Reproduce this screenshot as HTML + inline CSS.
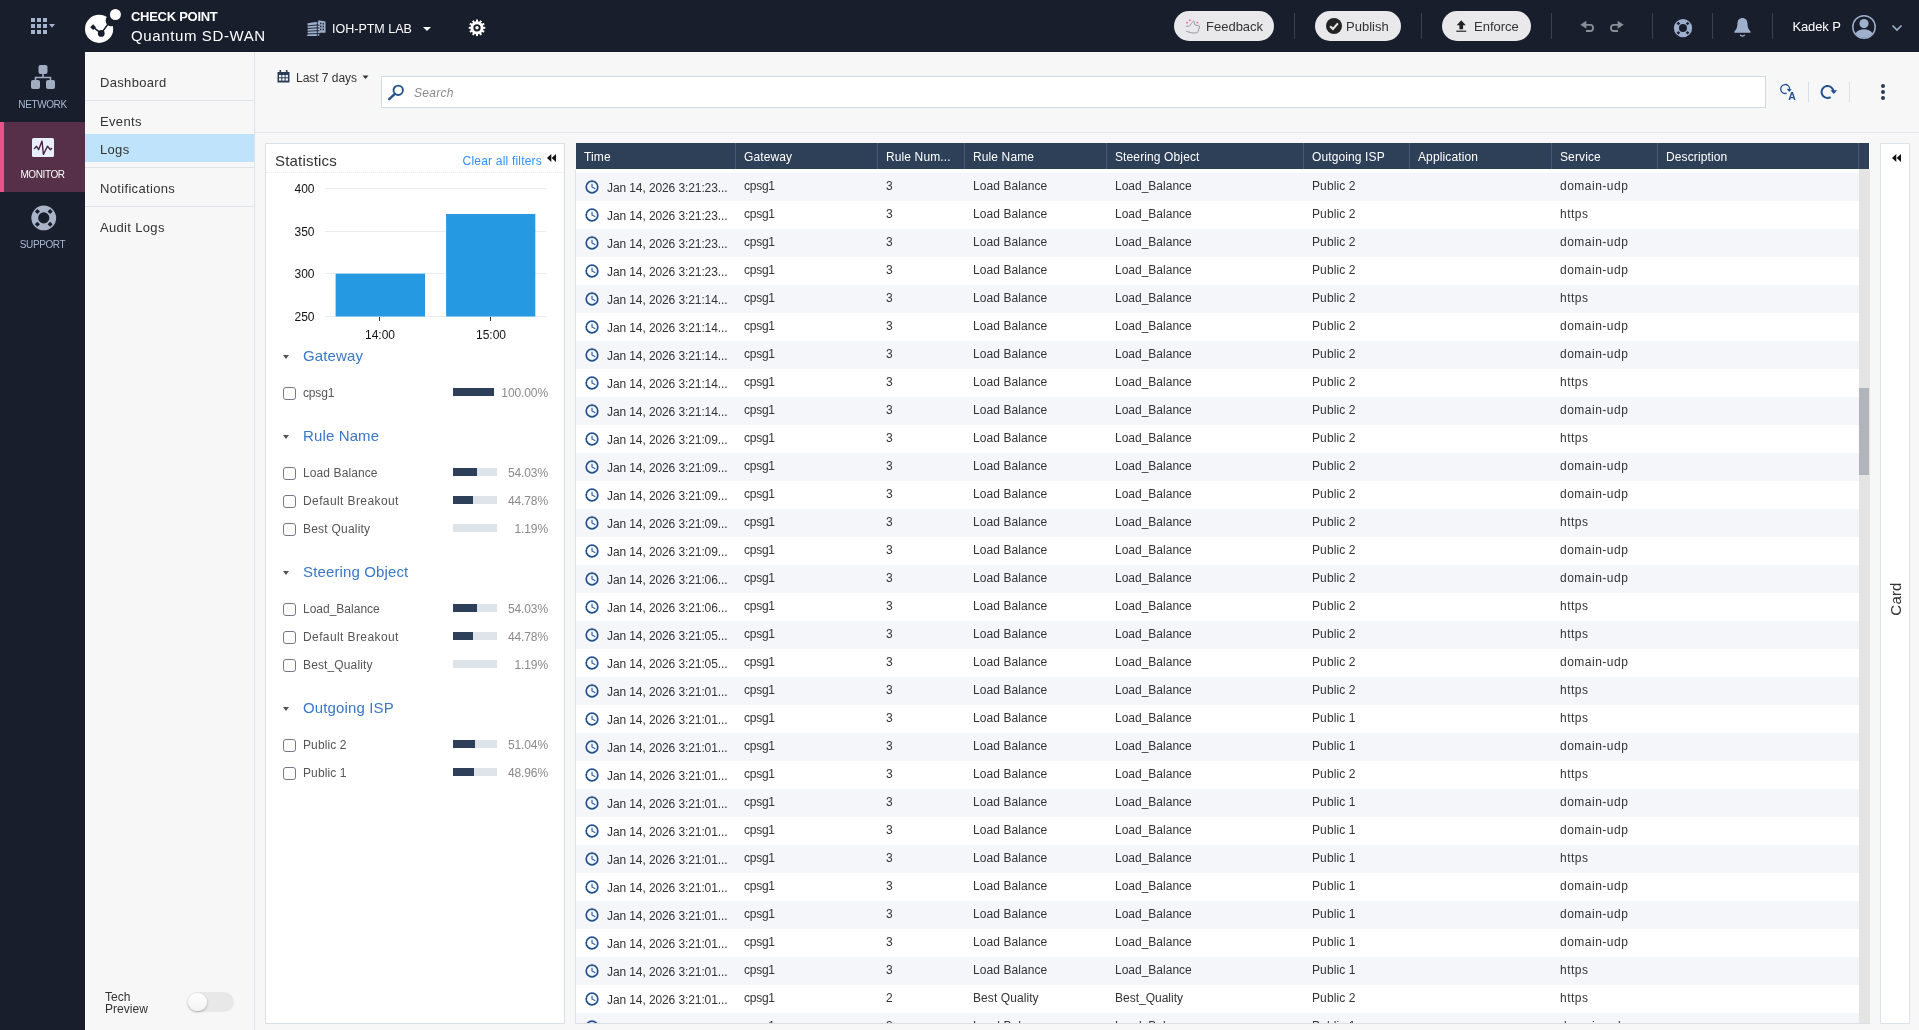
<!DOCTYPE html>
<html lang="en">
<head>
<meta charset="utf-8">
<title>Quantum SD-WAN - Logs</title>
<style>
*{box-sizing:border-box;margin:0;padding:0}
html,body{width:1919px;height:1030px;overflow:hidden}
body{background:#f7f7f7;font-family:"Liberation Sans",sans-serif;font-size:12px;color:#333;position:relative}
.abs{position:absolute}
body>*{will-change:transform}
/* header */
#hdr{position:absolute;left:0;top:0;width:1919px;height:52px;background:#181e2c}
#nav{position:absolute;left:0;top:52px;width:85px;height:978px;background:#181e2c}
.hb{position:absolute;top:11px;height:30px;border-radius:15px;background:#e9e9eb;color:#333;font-size:13px;line-height:32px;white-space:nowrap}
.hb span{position:absolute;top:0}
.hdiv{position:absolute;top:13px;width:1px;height:26px;background:#3a4152}
.brand1{position:absolute;left:131px;top:9px;font-size:13px;font-weight:bold;color:#fff;line-height:15px;letter-spacing:-0.28px;white-space:nowrap}
.brand2{position:absolute;left:131px;top:25.700px;font-size:15px;color:#fff;line-height:20px;white-space:nowrap;letter-spacing:0.62px}
.tenant{position:absolute;left:332px;top:20px;font-size:12.500px;color:#fff;line-height:18px;white-space:nowrap}
.user{position:absolute;left:1792.400px;top:17.500px;font-size:13px;letter-spacing:-0.1px;color:#fff;line-height:18px;white-space:nowrap}
/* nav */
.ni{position:absolute;left:0;width:85px;height:70px}
.ni .lb{position:absolute;left:0;width:85px;text-align:center;top:46px;font-size:10px;line-height:14px;color:#a9b8d4;letter-spacing:-0.4px}
.ni.act{background:#562f48}
.ni.act:before{content:"";position:absolute;left:0;top:0;width:4px;height:70px;background:#e8548a}
.ni.act .lb{color:#fff}
.ni svg{position:absolute}
/* submenu */
#sub{position:absolute;left:85px;top:52px;width:170px;height:978px;background:#f7f7f7;border-right:1px solid #dfe3e8}
.si{position:absolute;left:0;width:169px;height:28px;line-height:30px;padding-left:15px;font-size:13px;color:#333;letter-spacing:0.33px}
.si.sel{background:#bfe3fb;line-height:31px}
.ss{position:absolute;left:0;width:169px;height:1px;background:#dfe3e8}
/* toolbar */
#tbline{position:absolute;left:255px;top:132px;width:1664px;height:1px;background:#e1e5ea}
#search{position:absolute;left:381px;top:76px;width:1385px;height:32px;background:#fff;border:1px solid #d3d9e1}
#search .ph{position:absolute;left:32px;top:1px;line-height:30px;font-size:12px;font-style:italic;color:#8a8a8a;letter-spacing:0.3px}
.range{position:absolute;left:296px;top:70px;font-size:12px;line-height:16px;color:#333;white-space:nowrap;letter-spacing:-0.03px}
.tdiv{position:absolute;top:82px;width:1px;height:20px;background:#d8dfe9}
/* stats panel */
#stats{position:absolute;left:265px;top:143px;width:300px;height:881px;background:#fff;border:1px solid #d9e0e8}
#stats .ttl{position:absolute;left:9px;top:6px;font-size:15px;line-height:22px;color:#333;letter-spacing:0.2px}
#stats .clr{position:absolute;right:22px;top:8px;font-size:12px;line-height:18px;color:#3090fc;letter-spacing:0.2px}
#stats .dot{position:absolute;left:0;top:28px;width:298px;height:0;border-top:1px dotted #e9e9e9}
.fh{position:absolute;left:37px;font-size:15px;line-height:20px;color:#3a78c8;white-space:nowrap;letter-spacing:0.13px}
.ft{position:absolute;left:17px;width:0;height:0;border-left:3px solid transparent;border-right:3px solid transparent;border-top:4px solid #555}
.fi{position:absolute;left:0;width:298px;height:28px}
.fi .cb{position:absolute;left:17px;top:8px;width:13px;height:13px;border:1px solid #77768a;border-radius:3px;background:#fff}
.fi .fn{position:absolute;left:37px;top:0;line-height:28px;font-size:12px;color:#555;white-space:nowrap}
.fi .trk{position:absolute;left:187px;top:9px;height:8px;background:#dfe3ea}
.fi .fl{position:absolute;left:0;top:0;height:8px;background:#2e3f5a}
.fi .pc{position:absolute;right:16px;top:0;line-height:28px;font-size:12px;color:#8a8a8a;white-space:nowrap;letter-spacing:-0.1px}
/* table */
#tbl{position:absolute;left:575px;top:143px;width:1295px;height:881px;background:#fff;overflow:hidden;border-bottom:1px solid #dde1e6;border-left:1px solid #dfe4ea}
#tblcap{position:absolute;left:575px;top:143px;width:1px;height:26px;background:#f7f7f7}
#th{position:absolute;left:0;top:0;width:1293px;height:26px;background:#2e3f58;z-index:2}
#th span{position:absolute;top:0;height:26px;line-height:28px;color:#fff;font-size:12px;padding-left:8px;border-left:1px solid #465a78;white-space:nowrap;letter-spacing:0.12px}
#th span:first-child{border-left:none}
#body{position:absolute;left:0;top:26px;width:1283px;height:854px;overflow:hidden}
.r{position:absolute;left:0;width:1283px;height:28px;background:#fff}
.r.g{background:#f5f6f9}
.c{position:absolute;top:0;height:28px;line-height:27px;font-size:12px;color:#333;white-space:nowrap}
.c0{left:0;letter-spacing:-0.1px}.c1{left:168px;letter-spacing:-0.25px}.c2{left:310px}.c3{left:397px;letter-spacing:0.08px}.c4{left:539px}.c5{left:736px;letter-spacing:0.1px}.c6{left:842px}.c7{left:984px;letter-spacing:0.5px}.c8{left:1090px}
.clk{position:absolute;left:9px;top:7px}
.tt{position:absolute;left:31px;top:0;line-height:31px}
#sbar{position:absolute;left:1283px;top:26px;width:11px;height:854px;background:#e4e4e4}
#sthumb{position:absolute;left:0;top:219px;width:10px;height:87px;background:#b1b5b9}
/* card */
#card{position:absolute;left:1880px;top:143px;width:30px;height:881px;background:#fff;border:1px solid #dde3ec}
#card .t{position:absolute;left:-19px;top:445px;width:68px;height:20px;line-height:20px;text-align:center;font-size:15px;color:#333;transform:rotate(-90deg);letter-spacing:0.2px}
</style>
</head>
<body>
<!-- HEADER -->
<div id="hdr">
  <svg class="abs" style="left:31px;top:18px" width="26" height="18" viewBox="0 0 26 18">
    <g fill="#a6b3cc"><rect x="0" y="0" width="4" height="4"/><rect x="6" y="0" width="4" height="4"/><rect x="12" y="0" width="4" height="4"/>
    <rect x="0" y="6" width="4" height="4"/><rect x="6" y="6" width="4" height="4"/><rect x="12" y="6" width="4" height="4"/>
    <rect x="0" y="12" width="4" height="4"/><rect x="6" y="12" width="4" height="4"/><rect x="12" y="12" width="4" height="4"/>
    <path d="M18 6h6l-3 3.800z"/></g>
  </svg>
  <svg class="abs" style="left:84px;top:6px" width="40" height="40" viewBox="0 0 40 40">
    <circle cx="15.100" cy="22.900" r="14.100" fill="#fff"/>
    <circle cx="27.300" cy="14.600" r="5.700" fill="#181e2c"/>
    <circle cx="31.400" cy="8.500" r="5.500" fill="#fff"/>
    <g fill="#181e2c" stroke="#181e2c"><path d="M9.100 21.200L17.200 27.400L24.200 17.800" fill="none" stroke-width="1.500"/><path d="M9.100 18.300l2.900 2.900l-2.900 2.900l-2.900-2.900z" stroke="none"/><circle cx="17.250" cy="27.400" r="3.400" stroke="none"/></g>
  </svg>
  <div class="brand1">CHECK POINT</div>
  <div class="brand2">Quantum SD-WAN</div>
  <svg class="abs" style="left:306px;top:19px" width="20" height="18" viewBox="0 0 20 18">
    <path d="M12.300 1.300L19.500 2.600V13.800H12.300z" fill="#9fb0cc"/>
    <g fill="#181e2c"><rect x="14.100" y="3.600" width="1.300" height="1.700"/><rect x="16.600" y="3.900" width="1.300" height="1.700"/><rect x="14.100" y="6.600" width="1.300" height="1.700"/><rect x="16.600" y="6.700" width="1.300" height="1.700"/><rect x="14.100" y="9.600" width="1.300" height="1.700"/><rect x="16.600" y="9.600" width="1.300" height="1.700"/></g>
    <path d="M1.600 4.200L11.300 2.700L13.300 3.300V16.500L11.300 17H0.300L1.600 16z" fill="#9fb0cc"/>
    <g stroke="#181e2c" stroke-width="0.900" fill="none"><path d="M0 7.100L11.300 5.900L13.500 6.300M0 9.700L11.300 8.800L13.500 9.100M0 12.300L11.300 11.700L13.500 11.900M0 14.900L11.300 14.600L13.500 14.700M11.300 2.500V17"/></g>
  </svg>
  <div class="tenant">IOH-PTM LAB</div>
  <svg class="abs" style="left:422px;top:26px" width="10" height="6" viewBox="0 0 10 6"><path d="M1 1h8L5 5z" fill="#fff"/></svg>
  <svg class="abs" style="left:467px;top:18px" width="20" height="20" viewBox="0 0 20 20"><g transform="translate(10 9.800)"><g fill="#fff"><rect x="-1" y="-8.250" width="2" height="3" transform="rotate(0)"/><rect x="-1" y="-8.250" width="2" height="3" transform="rotate(30)"/><rect x="-1" y="-8.250" width="2" height="3" transform="rotate(60)"/><rect x="-1" y="-8.250" width="2" height="3" transform="rotate(90)"/><rect x="-1" y="-8.250" width="2" height="3" transform="rotate(120)"/><rect x="-1" y="-8.250" width="2" height="3" transform="rotate(150)"/><rect x="-1" y="-8.250" width="2" height="3" transform="rotate(180)"/><rect x="-1" y="-8.250" width="2" height="3" transform="rotate(210)"/><rect x="-1" y="-8.250" width="2" height="3" transform="rotate(240)"/><rect x="-1" y="-8.250" width="2" height="3" transform="rotate(270)"/><rect x="-1" y="-8.250" width="2" height="3" transform="rotate(300)"/><rect x="-1" y="-8.250" width="2" height="3" transform="rotate(330)"/></g><circle r="5.100" fill="none" stroke="#fff" stroke-width="2.900"/><circle r="1.700" fill="#fff"/></g></svg>

  <div class="hb" style="left:1174px;width:100px">
    <svg class="abs" style="left:11px;top:7px" width="17" height="17" viewBox="0 0 17 17"><path d="M0.900 8.300L4.400 8C5.800 6.500 7 4.800 8.100 3.300c.7-.3 1.200 0 1.300 .4l.3 3.050l4.700 1.250v2.800l-1 .3l-.3 2.500l-1.200 1.300h-5L1.250 13.300" fill="none" stroke="#9c9ca1" stroke-width="1" stroke-linejoin="round"/><g fill="#f0568f"><path d="M4.900 .9l.45 .9l.9 .45l-.9 .45l-.45 .9l-.45-.9l-.9-.45l.9-.45z"/><path d="M2 3.400l.45 .9l.9 .45l-.9 .45l-.45 .9l-.45-.9l-.9-.45l.9-.45z"/><path d="M12.300 3.250l.45 .9l.9 .45l-.9 .45l-.45 .9l-.45-.9l-.9-.45l.9-.45z"/></g></svg>
    <span style="left:32px">Feedback</span></div>
  <div class="hdiv" style="left:1294px"></div>
  <div class="hb" style="left:1315px;width:86px">
    <svg class="abs" style="left:11px;top:7px" width="16" height="16" viewBox="0 0 16 16"><circle cx="8" cy="8" r="8" fill="#222"/><path d="M4.200 8.300l2.700 2.700l5-5.600" fill="none" stroke="#e9e9eb" stroke-width="2.100"/></svg>
    <span style="left:31px">Publish</span></div>
  <div class="hdiv" style="left:1421px"></div>
  <div class="hb" style="left:1442px;width:89px">
    <svg class="abs" style="left:14px;top:8px" width="12" height="14" viewBox="0 0 12 14"><path d="M5.250 1.200L9.800 6.200H7.100V10.200H3.400V6.200H0.700z" fill="#222"/><rect x="0.300" y="11.600" width="9.900" height="1.200" fill="#222"/></svg>
    <span style="left:32px">Enforce</span></div>
  <div class="hdiv" style="left:1551px"></div>
  <svg class="abs" style="left:1579px;top:19px" width="17" height="14" viewBox="0 0 17 14"><path d="M1.300 5.800L7.400 1.800V9.800z" fill="#8b8e95"/><path d="M7 5.800H11a3.100 3.100 0 0 1 0 6.200H7" fill="none" stroke="#8b8e95" stroke-width="1.800"/></svg>
  <svg class="abs" style="left:1608px;top:19px" width="17" height="14" viewBox="0 0 17 14"><g transform="translate(17 0) scale(-1 1)"><path d="M1.300 5.800L7.400 1.800V9.800z" fill="#8b8e95"/><path d="M7 5.800H11a3.100 3.100 0 0 1 0 6.200H7" fill="none" stroke="#8b8e95" stroke-width="1.800"/></g></svg>
  <div class="hdiv" style="left:1652px"></div>
  <svg class="abs" style="left:1673px;top:18px" width="20" height="21" viewBox="0 0 20 21"><g transform="translate(10 10.1)"><circle r="6.575" fill="none" stroke="#9dafcd" stroke-width="5.150"/><g fill="#181e2c"><rect x="-1.250" y="-7.750" width="2.5" height="2.5" transform="rotate(45)"/><rect x="-1.250" y="-7.750" width="2.5" height="2.5" transform="rotate(135)"/><rect x="-1.250" y="-7.750" width="2.5" height="2.5" transform="rotate(225)"/><rect x="-1.250" y="-7.750" width="2.5" height="2.5" transform="rotate(315)"/></g></g></svg>
  <div class="hdiv" style="left:1712px"></div>
  <svg class="abs" style="left:1734px;top:17px" width="18" height="21" viewBox="0 0 18 21"><path d="M8.450 0.900c3.100 0 5 2.400 5 5.300c0 3.800 .9 6 3.050 8.200v1.350H0.400v-1.350c2.150-2.200 3.050-4.400 3.050-8.200c0-2.900 1.900-5.300 5-5.300z" fill="#9fb0cc"/><path d="M6.200 17.700c.6 1.700 3.900 1.700 4.500 0" fill="none" stroke="#9fb0cc" stroke-width="1.300"/></svg>
  <div class="hdiv" style="left:1772px"></div>
  <div class="user">Kadek P</div>
  <svg class="abs" style="left:1852px;top:15px" width="24" height="24" viewBox="0 0 24 24"><defs><clipPath id="av"><circle cx="12" cy="12" r="10.800"/></clipPath></defs><circle cx="12" cy="12" r="11.200" fill="#181e2c" stroke="#9fb0cc" stroke-width="1.500"/><g clip-path="url(#av)" fill="#9fb0cc"><circle cx="12" cy="8.600" r="4.600"/><ellipse cx="12" cy="21" rx="9.500" ry="6.800"/></g></svg>
  <svg class="abs" style="left:1891px;top:24px" width="12" height="8" viewBox="0 0 12 8"><path d="M1.500 1.500L6 6l4.500-4.500" fill="none" stroke="#9fb0cc" stroke-width="1.600"/></svg>
</div>

<!-- LEFT NAV -->
<div id="nav">
  <div class="ni" style="top:0">
    <svg style="left:30px;top:12px" width="26" height="26" viewBox="0 0 26 26"><g fill="#a3adc2"><rect x="8.500" y="1" width="9" height="9" rx="2"/><rect x="1" y="16" width="9" height="9" rx="2"/><rect x="16" y="16" width="9" height="9" rx="2"/></g><path d="M13 10v3.500M5.500 16v-2.500h15V16" fill="none" stroke="#a3adc2" stroke-width="1.600"/></svg>
    <div class="lb">NETWORK</div></div>
  <div class="ni act" style="top:70px">
    <svg style="left:32px;top:16px" width="22" height="19" viewBox="0 0 22 19"><rect x="0" y="0" width="22" height="19" rx="1.600" fill="#e9effd"/><path d="M2.400 10.500L4.600 8.300L6.600 11.700L10 3.100L11.400 16.400L15.500 8.200L18.500 11.700L19.700 10.400" fill="none" stroke="#4a1f3c" stroke-width="1.350" stroke-linejoin="round" stroke-linecap="round"/></svg>
    <div class="lb">MONITOR</div></div>
  <div class="ni" style="top:140px">
    <svg style="left:30px;top:13px" width="28" height="28" viewBox="0 0 28 28"><g transform="translate(13.75 12.9)"><circle r="9.000" fill="none" stroke="#a9b4c8" stroke-width="6.800"/><g fill="#181e2c"><rect x="-1.800" y="-10.800" width="3.6" height="3.6" transform="rotate(45)"/><rect x="-1.800" y="-10.800" width="3.6" height="3.6" transform="rotate(135)"/><rect x="-1.800" y="-10.800" width="3.6" height="3.6" transform="rotate(225)"/><rect x="-1.800" y="-10.800" width="3.6" height="3.6" transform="rotate(315)"/></g></g></svg>
    <div class="lb">SUPPORT</div></div>
</div>

<!-- SUBMENU -->
<div id="sub">
  <div class="si" style="top:16px">Dashboard</div>
  <div class="ss" style="top:48px"></div>
  <div class="si" style="top:55px">Events</div>
  <div class="si sel" style="top:82px">Logs</div>
  <div class="ss" style="top:115px"></div>
  <div class="si" style="top:122px">Notifications</div>
  <div class="ss" style="top:154px"></div>
  <div class="si" style="top:161px">Audit Logs</div>
  <div class="abs" style="left:20px;top:938.500px;font-size:12px;line-height:12.200px;color:#333;letter-spacing:0.05px">Tech<br>Preview</div>
  <div class="abs" style="left:103px;top:940px;width:46px;height:20px;border-radius:10px;background:#e8e8e8"></div>
  <div class="abs" style="left:103px;top:940.700px;width:18.500px;height:18.500px;border-radius:10px;background:linear-gradient(#fff,#f3f3f3);box-shadow:0 1px 2.500px rgba(0,0,0,.3)"></div>
</div>

<!-- TOOLBAR -->
<svg class="abs" style="left:277px;top:70px" width="13" height="13" viewBox="0 0 13 13"><path d="M0.500 2h12v10.500h-12z" fill="#2b3c57"/><rect x="2.500" y="0" width="1.600" height="3" fill="#2b3c57"/><rect x="8.900" y="0" width="1.600" height="3" fill="#2b3c57"/><g fill="#f7f7f7"><rect x="2" y="5" width="2.300" height="2.300"/><rect x="5.300" y="5" width="2.300" height="2.300"/><rect x="8.600" y="5" width="2.300" height="2.300"/><rect x="2" y="8.300" width="2.300" height="2.300"/><rect x="5.300" y="8.300" width="2.300" height="2.300"/><rect x="8.600" y="8.300" width="2.300" height="2.300"/></g></svg>
<div class="range">Last 7 days</div>
<svg class="abs" style="left:362px;top:75px" width="7" height="5" viewBox="0 0 7 5"><path d="M0.500 0.500h6L3.500 4z" fill="#333"/></svg>
<div id="search">
  <svg class="abs" style="left:6px;top:7px" width="17" height="17" viewBox="0 0 17 17"><circle cx="10.200" cy="6.300" r="4.700" fill="none" stroke="#23528f" stroke-width="1.900"/><path d="M6.800 9.800L1.300 15.200" stroke="#23528f" stroke-width="2.400" stroke-linecap="round"/></svg>
  <div class="ph">Search</div>
</div>
<svg class="abs" style="left:1779px;top:83px" width="18" height="18" viewBox="0 0 18 18"><path d="M10.700 6A4.500 4.500 0 1 0 7.740 10.230" fill="none" stroke="#23528f" stroke-width="1.300"/><path d="M7.600 5.700L12.700 6.300L10.300 9z" fill="#23528f"/><text x="13" y="16.800" text-anchor="middle" font-family="Liberation Sans, sans-serif" font-size="10.500" font-weight="bold" fill="#23528f">A</text></svg>
<div class="tdiv" style="left:1808px"></div>
<svg class="abs" style="left:1820px;top:84px" width="19" height="16" viewBox="0 0 19 16"><path d="M13.600 8A6 6 0 1 0 10.600 13.200" fill="none" stroke="#23528f" stroke-width="2"/><path d="M10.500 6.300H17.200L13.700 10.100z" fill="#23528f"/></svg>
<div class="tdiv" style="left:1849px"></div>
<svg class="abs" style="left:1880px;top:83px" width="6" height="18" viewBox="0 0 6 18"><g fill="#2b3c57"><circle cx="3" cy="3" r="2.050"/><circle cx="3" cy="9" r="2.050"/><circle cx="3" cy="15" r="2.050"/></g></svg>
<div id="tbline"></div>

<!-- STATISTICS -->
<div id="stats">
  <div class="ttl">Statistics</div>
  <div class="clr">Clear all filters</div>
  <svg class="abs" style="left:281px;top:10px" width="9" height="8" viewBox="0 0 9 8"><path d="M4.300 0v8L0 4zM9 0v8L4.700 4z" fill="#111"/></svg>
  <div class="dot"></div>
  <svg class="abs" style="left:0;top:30px" width="298" height="175" viewBox="0 0 298 175">
    <g stroke="#e9ebee" stroke-width="1"><path d="M59 14.500H280M59 57.500H280M59 99.500H280M59 142.500H280"/></g>
    <g stroke="#333" stroke-width="1"><path d="M113.500 143v4M224.500 143v4"/></g>
    <rect x="69.600" y="99.700" width="89.400" height="42.800" fill="#2699e3"/>
    <rect x="180.100" y="40" width="89.200" height="102.500" fill="#2699e3"/>
    <g font-family="Liberation Sans, sans-serif" font-size="12" fill="#111">
      <text x="48.500" y="18.800" text-anchor="end">400</text>
      <text x="48.500" y="61.800" text-anchor="end">350</text>
      <text x="48.500" y="103.800" text-anchor="end">300</text>
      <text x="48.500" y="146.800" text-anchor="end">250</text>
      <text x="114" y="165" text-anchor="middle">14:00</text>
      <text x="225" y="165" text-anchor="middle">15:00</text>
    </g>
  </svg>
  <div class="ft" style="top:211px"></div><div class="fh" style="top:202px">Gateway</div>
<div class="fi" style="top:235px"><span class="cb"></span><span class="fn" style="letter-spacing:-0.15px">cpsg1</span><span class="trk" style="width:41px"><span class="fl" style="width:41px"></span></span><span class="pc">100.00%</span></div>
  <div class="ft" style="top:291px"></div><div class="fh" style="top:282px">Rule Name</div>
<div class="fi" style="top:315px"><span class="cb"></span><span class="fn" style="letter-spacing:0.1px">Load Balance</span><span class="trk" style="width:44px"><span class="fl" style="width:24px"></span></span><span class="pc">54.03%</span></div>
<div class="fi" style="top:343px"><span class="cb"></span><span class="fn" style="letter-spacing:0.4px">Default Breakout</span><span class="trk" style="width:44px"><span class="fl" style="width:20px"></span></span><span class="pc">44.78%</span></div>
<div class="fi" style="top:371px"><span class="cb"></span><span class="fn" style="letter-spacing:0.22px">Best Quality</span><span class="trk" style="width:44px"><span class="fl" style="width:0px"></span></span><span class="pc">1.19%</span></div>
  <div class="ft" style="top:427px"></div><div class="fh" style="top:418px">Steering Object</div>
<div class="fi" style="top:451px"><span class="cb"></span><span class="fn">Load_Balance</span><span class="trk" style="width:44px"><span class="fl" style="width:24px"></span></span><span class="pc">54.03%</span></div>
<div class="fi" style="top:479px"><span class="cb"></span><span class="fn" style="letter-spacing:0.4px">Default Breakout</span><span class="trk" style="width:44px"><span class="fl" style="width:20px"></span></span><span class="pc">44.78%</span></div>
<div class="fi" style="top:507px"><span class="cb"></span><span class="fn" style="letter-spacing:0.13px">Best_Quality</span><span class="trk" style="width:44px"><span class="fl" style="width:0px"></span></span><span class="pc">1.19%</span></div>
  <div class="ft" style="top:563px"></div><div class="fh" style="top:554px">Outgoing ISP</div>
<div class="fi" style="top:587px"><span class="cb"></span><span class="fn" style="letter-spacing:0.1px">Public 2</span><span class="trk" style="width:44px"><span class="fl" style="width:22px"></span></span><span class="pc">51.04%</span></div>
<div class="fi" style="top:615px"><span class="cb"></span><span class="fn" style="letter-spacing:0.1px">Public 1</span><span class="trk" style="width:44px"><span class="fl" style="width:21px"></span></span><span class="pc">48.96%</span></div>
</div>

<!-- TABLE -->
<div id="tbl">
  <div id="th"><span style="left:0;width:159px">Time</span><span style="left:159px;width:142px">Gateway</span><span style="left:301px;width:87px">Rule Num...</span><span style="left:388px;width:142px">Rule Name</span><span style="left:530px;width:197px">Steering Object</span><span style="left:727px;width:106px">Outgoing ISP</span><span style="left:833px;width:142px">Application</span><span style="left:975px;width:106px">Service</span><span style="left:1081px;width:201px">Description</span><span style="left:1282px;width:11px"></span></div>
  <div id="body">
<div class="r g" style="top:4px"><span class="c c0"><svg class="clk" width="14" height="14" viewBox="0 0 14 14"><circle cx="7" cy="7" r="5.800" fill="none" stroke="#22528f" stroke-width="1.7"/><path d="M7 4.200V7L9.800 8.500" fill="none" stroke="#3a66a0" stroke-width="1.250" stroke-linecap="round" stroke-linejoin="round"/></svg><span class="tt">Jan 14, 2026 3:21:23...</span></span><span class="c c1">cpsg1</span><span class="c c2">3</span><span class="c c3">Load Balance</span><span class="c c4">Load_Balance</span><span class="c c5">Public 2</span><span class="c c6"></span><span class="c c7">domain-udp</span><span class="c c8"></span></div>
<div class="r" style="top:32px"><span class="c c0"><svg class="clk" width="14" height="14" viewBox="0 0 14 14"><circle cx="7" cy="7" r="5.800" fill="none" stroke="#22528f" stroke-width="1.7"/><path d="M7 4.200V7L9.800 8.500" fill="none" stroke="#3a66a0" stroke-width="1.250" stroke-linecap="round" stroke-linejoin="round"/></svg><span class="tt">Jan 14, 2026 3:21:23...</span></span><span class="c c1">cpsg1</span><span class="c c2">3</span><span class="c c3">Load Balance</span><span class="c c4">Load_Balance</span><span class="c c5">Public 2</span><span class="c c6"></span><span class="c c7">https</span><span class="c c8"></span></div>
<div class="r g" style="top:60px"><span class="c c0"><svg class="clk" width="14" height="14" viewBox="0 0 14 14"><circle cx="7" cy="7" r="5.800" fill="none" stroke="#22528f" stroke-width="1.7"/><path d="M7 4.200V7L9.800 8.500" fill="none" stroke="#3a66a0" stroke-width="1.250" stroke-linecap="round" stroke-linejoin="round"/></svg><span class="tt">Jan 14, 2026 3:21:23...</span></span><span class="c c1">cpsg1</span><span class="c c2">3</span><span class="c c3">Load Balance</span><span class="c c4">Load_Balance</span><span class="c c5">Public 2</span><span class="c c6"></span><span class="c c7">domain-udp</span><span class="c c8"></span></div>
<div class="r" style="top:88px"><span class="c c0"><svg class="clk" width="14" height="14" viewBox="0 0 14 14"><circle cx="7" cy="7" r="5.800" fill="none" stroke="#22528f" stroke-width="1.7"/><path d="M7 4.200V7L9.800 8.500" fill="none" stroke="#3a66a0" stroke-width="1.250" stroke-linecap="round" stroke-linejoin="round"/></svg><span class="tt">Jan 14, 2026 3:21:23...</span></span><span class="c c1">cpsg1</span><span class="c c2">3</span><span class="c c3">Load Balance</span><span class="c c4">Load_Balance</span><span class="c c5">Public 2</span><span class="c c6"></span><span class="c c7">domain-udp</span><span class="c c8"></span></div>
<div class="r g" style="top:116px"><span class="c c0"><svg class="clk" width="14" height="14" viewBox="0 0 14 14"><circle cx="7" cy="7" r="5.800" fill="none" stroke="#22528f" stroke-width="1.7"/><path d="M7 4.200V7L9.800 8.500" fill="none" stroke="#3a66a0" stroke-width="1.250" stroke-linecap="round" stroke-linejoin="round"/></svg><span class="tt">Jan 14, 2026 3:21:14...</span></span><span class="c c1">cpsg1</span><span class="c c2">3</span><span class="c c3">Load Balance</span><span class="c c4">Load_Balance</span><span class="c c5">Public 2</span><span class="c c6"></span><span class="c c7">https</span><span class="c c8"></span></div>
<div class="r" style="top:144px"><span class="c c0"><svg class="clk" width="14" height="14" viewBox="0 0 14 14"><circle cx="7" cy="7" r="5.800" fill="none" stroke="#22528f" stroke-width="1.7"/><path d="M7 4.200V7L9.800 8.500" fill="none" stroke="#3a66a0" stroke-width="1.250" stroke-linecap="round" stroke-linejoin="round"/></svg><span class="tt">Jan 14, 2026 3:21:14...</span></span><span class="c c1">cpsg1</span><span class="c c2">3</span><span class="c c3">Load Balance</span><span class="c c4">Load_Balance</span><span class="c c5">Public 2</span><span class="c c6"></span><span class="c c7">domain-udp</span><span class="c c8"></span></div>
<div class="r g" style="top:172px"><span class="c c0"><svg class="clk" width="14" height="14" viewBox="0 0 14 14"><circle cx="7" cy="7" r="5.800" fill="none" stroke="#22528f" stroke-width="1.7"/><path d="M7 4.200V7L9.800 8.500" fill="none" stroke="#3a66a0" stroke-width="1.250" stroke-linecap="round" stroke-linejoin="round"/></svg><span class="tt">Jan 14, 2026 3:21:14...</span></span><span class="c c1">cpsg1</span><span class="c c2">3</span><span class="c c3">Load Balance</span><span class="c c4">Load_Balance</span><span class="c c5">Public 2</span><span class="c c6"></span><span class="c c7">domain-udp</span><span class="c c8"></span></div>
<div class="r" style="top:200px"><span class="c c0"><svg class="clk" width="14" height="14" viewBox="0 0 14 14"><circle cx="7" cy="7" r="5.800" fill="none" stroke="#22528f" stroke-width="1.7"/><path d="M7 4.200V7L9.800 8.500" fill="none" stroke="#3a66a0" stroke-width="1.250" stroke-linecap="round" stroke-linejoin="round"/></svg><span class="tt">Jan 14, 2026 3:21:14...</span></span><span class="c c1">cpsg1</span><span class="c c2">3</span><span class="c c3">Load Balance</span><span class="c c4">Load_Balance</span><span class="c c5">Public 2</span><span class="c c6"></span><span class="c c7">https</span><span class="c c8"></span></div>
<div class="r g" style="top:228px"><span class="c c0"><svg class="clk" width="14" height="14" viewBox="0 0 14 14"><circle cx="7" cy="7" r="5.800" fill="none" stroke="#22528f" stroke-width="1.7"/><path d="M7 4.200V7L9.800 8.500" fill="none" stroke="#3a66a0" stroke-width="1.250" stroke-linecap="round" stroke-linejoin="round"/></svg><span class="tt">Jan 14, 2026 3:21:14...</span></span><span class="c c1">cpsg1</span><span class="c c2">3</span><span class="c c3">Load Balance</span><span class="c c4">Load_Balance</span><span class="c c5">Public 2</span><span class="c c6"></span><span class="c c7">domain-udp</span><span class="c c8"></span></div>
<div class="r" style="top:256px"><span class="c c0"><svg class="clk" width="14" height="14" viewBox="0 0 14 14"><circle cx="7" cy="7" r="5.800" fill="none" stroke="#22528f" stroke-width="1.7"/><path d="M7 4.200V7L9.800 8.500" fill="none" stroke="#3a66a0" stroke-width="1.250" stroke-linecap="round" stroke-linejoin="round"/></svg><span class="tt">Jan 14, 2026 3:21:09...</span></span><span class="c c1">cpsg1</span><span class="c c2">3</span><span class="c c3">Load Balance</span><span class="c c4">Load_Balance</span><span class="c c5">Public 2</span><span class="c c6"></span><span class="c c7">https</span><span class="c c8"></span></div>
<div class="r g" style="top:284px"><span class="c c0"><svg class="clk" width="14" height="14" viewBox="0 0 14 14"><circle cx="7" cy="7" r="5.800" fill="none" stroke="#22528f" stroke-width="1.7"/><path d="M7 4.200V7L9.800 8.500" fill="none" stroke="#3a66a0" stroke-width="1.250" stroke-linecap="round" stroke-linejoin="round"/></svg><span class="tt">Jan 14, 2026 3:21:09...</span></span><span class="c c1">cpsg1</span><span class="c c2">3</span><span class="c c3">Load Balance</span><span class="c c4">Load_Balance</span><span class="c c5">Public 2</span><span class="c c6"></span><span class="c c7">domain-udp</span><span class="c c8"></span></div>
<div class="r" style="top:312px"><span class="c c0"><svg class="clk" width="14" height="14" viewBox="0 0 14 14"><circle cx="7" cy="7" r="5.800" fill="none" stroke="#22528f" stroke-width="1.7"/><path d="M7 4.200V7L9.800 8.500" fill="none" stroke="#3a66a0" stroke-width="1.250" stroke-linecap="round" stroke-linejoin="round"/></svg><span class="tt">Jan 14, 2026 3:21:09...</span></span><span class="c c1">cpsg1</span><span class="c c2">3</span><span class="c c3">Load Balance</span><span class="c c4">Load_Balance</span><span class="c c5">Public 2</span><span class="c c6"></span><span class="c c7">domain-udp</span><span class="c c8"></span></div>
<div class="r g" style="top:340px"><span class="c c0"><svg class="clk" width="14" height="14" viewBox="0 0 14 14"><circle cx="7" cy="7" r="5.800" fill="none" stroke="#22528f" stroke-width="1.7"/><path d="M7 4.200V7L9.800 8.500" fill="none" stroke="#3a66a0" stroke-width="1.250" stroke-linecap="round" stroke-linejoin="round"/></svg><span class="tt">Jan 14, 2026 3:21:09...</span></span><span class="c c1">cpsg1</span><span class="c c2">3</span><span class="c c3">Load Balance</span><span class="c c4">Load_Balance</span><span class="c c5">Public 2</span><span class="c c6"></span><span class="c c7">https</span><span class="c c8"></span></div>
<div class="r" style="top:368px"><span class="c c0"><svg class="clk" width="14" height="14" viewBox="0 0 14 14"><circle cx="7" cy="7" r="5.800" fill="none" stroke="#22528f" stroke-width="1.7"/><path d="M7 4.200V7L9.800 8.500" fill="none" stroke="#3a66a0" stroke-width="1.250" stroke-linecap="round" stroke-linejoin="round"/></svg><span class="tt">Jan 14, 2026 3:21:09...</span></span><span class="c c1">cpsg1</span><span class="c c2">3</span><span class="c c3">Load Balance</span><span class="c c4">Load_Balance</span><span class="c c5">Public 2</span><span class="c c6"></span><span class="c c7">domain-udp</span><span class="c c8"></span></div>
<div class="r g" style="top:396px"><span class="c c0"><svg class="clk" width="14" height="14" viewBox="0 0 14 14"><circle cx="7" cy="7" r="5.800" fill="none" stroke="#22528f" stroke-width="1.7"/><path d="M7 4.200V7L9.800 8.500" fill="none" stroke="#3a66a0" stroke-width="1.250" stroke-linecap="round" stroke-linejoin="round"/></svg><span class="tt">Jan 14, 2026 3:21:06...</span></span><span class="c c1">cpsg1</span><span class="c c2">3</span><span class="c c3">Load Balance</span><span class="c c4">Load_Balance</span><span class="c c5">Public 2</span><span class="c c6"></span><span class="c c7">domain-udp</span><span class="c c8"></span></div>
<div class="r" style="top:424px"><span class="c c0"><svg class="clk" width="14" height="14" viewBox="0 0 14 14"><circle cx="7" cy="7" r="5.800" fill="none" stroke="#22528f" stroke-width="1.7"/><path d="M7 4.200V7L9.800 8.500" fill="none" stroke="#3a66a0" stroke-width="1.250" stroke-linecap="round" stroke-linejoin="round"/></svg><span class="tt">Jan 14, 2026 3:21:06...</span></span><span class="c c1">cpsg1</span><span class="c c2">3</span><span class="c c3">Load Balance</span><span class="c c4">Load_Balance</span><span class="c c5">Public 2</span><span class="c c6"></span><span class="c c7">https</span><span class="c c8"></span></div>
<div class="r g" style="top:452px"><span class="c c0"><svg class="clk" width="14" height="14" viewBox="0 0 14 14"><circle cx="7" cy="7" r="5.800" fill="none" stroke="#22528f" stroke-width="1.7"/><path d="M7 4.200V7L9.800 8.500" fill="none" stroke="#3a66a0" stroke-width="1.250" stroke-linecap="round" stroke-linejoin="round"/></svg><span class="tt">Jan 14, 2026 3:21:05...</span></span><span class="c c1">cpsg1</span><span class="c c2">3</span><span class="c c3">Load Balance</span><span class="c c4">Load_Balance</span><span class="c c5">Public 2</span><span class="c c6"></span><span class="c c7">https</span><span class="c c8"></span></div>
<div class="r" style="top:480px"><span class="c c0"><svg class="clk" width="14" height="14" viewBox="0 0 14 14"><circle cx="7" cy="7" r="5.800" fill="none" stroke="#22528f" stroke-width="1.7"/><path d="M7 4.200V7L9.800 8.500" fill="none" stroke="#3a66a0" stroke-width="1.250" stroke-linecap="round" stroke-linejoin="round"/></svg><span class="tt">Jan 14, 2026 3:21:05...</span></span><span class="c c1">cpsg1</span><span class="c c2">3</span><span class="c c3">Load Balance</span><span class="c c4">Load_Balance</span><span class="c c5">Public 2</span><span class="c c6"></span><span class="c c7">domain-udp</span><span class="c c8"></span></div>
<div class="r g" style="top:508px"><span class="c c0"><svg class="clk" width="14" height="14" viewBox="0 0 14 14"><circle cx="7" cy="7" r="5.800" fill="none" stroke="#22528f" stroke-width="1.7"/><path d="M7 4.200V7L9.800 8.500" fill="none" stroke="#3a66a0" stroke-width="1.250" stroke-linecap="round" stroke-linejoin="round"/></svg><span class="tt">Jan 14, 2026 3:21:01...</span></span><span class="c c1">cpsg1</span><span class="c c2">3</span><span class="c c3">Load Balance</span><span class="c c4">Load_Balance</span><span class="c c5">Public 2</span><span class="c c6"></span><span class="c c7">https</span><span class="c c8"></span></div>
<div class="r" style="top:536px"><span class="c c0"><svg class="clk" width="14" height="14" viewBox="0 0 14 14"><circle cx="7" cy="7" r="5.800" fill="none" stroke="#22528f" stroke-width="1.7"/><path d="M7 4.200V7L9.800 8.500" fill="none" stroke="#3a66a0" stroke-width="1.250" stroke-linecap="round" stroke-linejoin="round"/></svg><span class="tt">Jan 14, 2026 3:21:01...</span></span><span class="c c1">cpsg1</span><span class="c c2">3</span><span class="c c3">Load Balance</span><span class="c c4">Load_Balance</span><span class="c c5">Public 1</span><span class="c c6"></span><span class="c c7">https</span><span class="c c8"></span></div>
<div class="r g" style="top:564px"><span class="c c0"><svg class="clk" width="14" height="14" viewBox="0 0 14 14"><circle cx="7" cy="7" r="5.800" fill="none" stroke="#22528f" stroke-width="1.7"/><path d="M7 4.200V7L9.800 8.500" fill="none" stroke="#3a66a0" stroke-width="1.250" stroke-linecap="round" stroke-linejoin="round"/></svg><span class="tt">Jan 14, 2026 3:21:01...</span></span><span class="c c1">cpsg1</span><span class="c c2">3</span><span class="c c3">Load Balance</span><span class="c c4">Load_Balance</span><span class="c c5">Public 1</span><span class="c c6"></span><span class="c c7">domain-udp</span><span class="c c8"></span></div>
<div class="r" style="top:592px"><span class="c c0"><svg class="clk" width="14" height="14" viewBox="0 0 14 14"><circle cx="7" cy="7" r="5.800" fill="none" stroke="#22528f" stroke-width="1.7"/><path d="M7 4.200V7L9.800 8.500" fill="none" stroke="#3a66a0" stroke-width="1.250" stroke-linecap="round" stroke-linejoin="round"/></svg><span class="tt">Jan 14, 2026 3:21:01...</span></span><span class="c c1">cpsg1</span><span class="c c2">3</span><span class="c c3">Load Balance</span><span class="c c4">Load_Balance</span><span class="c c5">Public 2</span><span class="c c6"></span><span class="c c7">https</span><span class="c c8"></span></div>
<div class="r g" style="top:620px"><span class="c c0"><svg class="clk" width="14" height="14" viewBox="0 0 14 14"><circle cx="7" cy="7" r="5.800" fill="none" stroke="#22528f" stroke-width="1.7"/><path d="M7 4.200V7L9.800 8.500" fill="none" stroke="#3a66a0" stroke-width="1.250" stroke-linecap="round" stroke-linejoin="round"/></svg><span class="tt">Jan 14, 2026 3:21:01...</span></span><span class="c c1">cpsg1</span><span class="c c2">3</span><span class="c c3">Load Balance</span><span class="c c4">Load_Balance</span><span class="c c5">Public 1</span><span class="c c6"></span><span class="c c7">domain-udp</span><span class="c c8"></span></div>
<div class="r" style="top:648px"><span class="c c0"><svg class="clk" width="14" height="14" viewBox="0 0 14 14"><circle cx="7" cy="7" r="5.800" fill="none" stroke="#22528f" stroke-width="1.7"/><path d="M7 4.200V7L9.800 8.500" fill="none" stroke="#3a66a0" stroke-width="1.250" stroke-linecap="round" stroke-linejoin="round"/></svg><span class="tt">Jan 14, 2026 3:21:01...</span></span><span class="c c1">cpsg1</span><span class="c c2">3</span><span class="c c3">Load Balance</span><span class="c c4">Load_Balance</span><span class="c c5">Public 1</span><span class="c c6"></span><span class="c c7">domain-udp</span><span class="c c8"></span></div>
<div class="r g" style="top:676px"><span class="c c0"><svg class="clk" width="14" height="14" viewBox="0 0 14 14"><circle cx="7" cy="7" r="5.800" fill="none" stroke="#22528f" stroke-width="1.7"/><path d="M7 4.200V7L9.800 8.500" fill="none" stroke="#3a66a0" stroke-width="1.250" stroke-linecap="round" stroke-linejoin="round"/></svg><span class="tt">Jan 14, 2026 3:21:01...</span></span><span class="c c1">cpsg1</span><span class="c c2">3</span><span class="c c3">Load Balance</span><span class="c c4">Load_Balance</span><span class="c c5">Public 1</span><span class="c c6"></span><span class="c c7">https</span><span class="c c8"></span></div>
<div class="r" style="top:704px"><span class="c c0"><svg class="clk" width="14" height="14" viewBox="0 0 14 14"><circle cx="7" cy="7" r="5.800" fill="none" stroke="#22528f" stroke-width="1.7"/><path d="M7 4.200V7L9.800 8.500" fill="none" stroke="#3a66a0" stroke-width="1.250" stroke-linecap="round" stroke-linejoin="round"/></svg><span class="tt">Jan 14, 2026 3:21:01...</span></span><span class="c c1">cpsg1</span><span class="c c2">3</span><span class="c c3">Load Balance</span><span class="c c4">Load_Balance</span><span class="c c5">Public 1</span><span class="c c6"></span><span class="c c7">domain-udp</span><span class="c c8"></span></div>
<div class="r g" style="top:732px"><span class="c c0"><svg class="clk" width="14" height="14" viewBox="0 0 14 14"><circle cx="7" cy="7" r="5.800" fill="none" stroke="#22528f" stroke-width="1.7"/><path d="M7 4.200V7L9.800 8.500" fill="none" stroke="#3a66a0" stroke-width="1.250" stroke-linecap="round" stroke-linejoin="round"/></svg><span class="tt">Jan 14, 2026 3:21:01...</span></span><span class="c c1">cpsg1</span><span class="c c2">3</span><span class="c c3">Load Balance</span><span class="c c4">Load_Balance</span><span class="c c5">Public 1</span><span class="c c6"></span><span class="c c7">domain-udp</span><span class="c c8"></span></div>
<div class="r" style="top:760px"><span class="c c0"><svg class="clk" width="14" height="14" viewBox="0 0 14 14"><circle cx="7" cy="7" r="5.800" fill="none" stroke="#22528f" stroke-width="1.7"/><path d="M7 4.200V7L9.800 8.500" fill="none" stroke="#3a66a0" stroke-width="1.250" stroke-linecap="round" stroke-linejoin="round"/></svg><span class="tt">Jan 14, 2026 3:21:01...</span></span><span class="c c1">cpsg1</span><span class="c c2">3</span><span class="c c3">Load Balance</span><span class="c c4">Load_Balance</span><span class="c c5">Public 1</span><span class="c c6"></span><span class="c c7">domain-udp</span><span class="c c8"></span></div>
<div class="r g" style="top:788px"><span class="c c0"><svg class="clk" width="14" height="14" viewBox="0 0 14 14"><circle cx="7" cy="7" r="5.800" fill="none" stroke="#22528f" stroke-width="1.7"/><path d="M7 4.200V7L9.800 8.500" fill="none" stroke="#3a66a0" stroke-width="1.250" stroke-linecap="round" stroke-linejoin="round"/></svg><span class="tt">Jan 14, 2026 3:21:01...</span></span><span class="c c1">cpsg1</span><span class="c c2">3</span><span class="c c3">Load Balance</span><span class="c c4">Load_Balance</span><span class="c c5">Public 1</span><span class="c c6"></span><span class="c c7">https</span><span class="c c8"></span></div>
<div class="r" style="top:816px"><span class="c c0"><svg class="clk" width="14" height="14" viewBox="0 0 14 14"><circle cx="7" cy="7" r="5.800" fill="none" stroke="#22528f" stroke-width="1.7"/><path d="M7 4.200V7L9.800 8.500" fill="none" stroke="#3a66a0" stroke-width="1.250" stroke-linecap="round" stroke-linejoin="round"/></svg><span class="tt">Jan 14, 2026 3:21:01...</span></span><span class="c c1">cpsg1</span><span class="c c2">2</span><span class="c c3">Best Quality</span><span class="c c4">Best_Quality</span><span class="c c5">Public 2</span><span class="c c6"></span><span class="c c7">https</span><span class="c c8"></span></div>
<div class="r g" style="top:844px"><span class="c c0"><svg class="clk" width="14" height="14" viewBox="0 0 14 14"><circle cx="7" cy="7" r="5.800" fill="none" stroke="#22528f" stroke-width="1.7"/><path d="M7 4.200V7L9.800 8.500" fill="none" stroke="#3a66a0" stroke-width="1.250" stroke-linecap="round" stroke-linejoin="round"/></svg><span class="tt">Jan 14, 2026 3:21:01...</span></span><span class="c c1">cpsg1</span><span class="c c2">3</span><span class="c c3">Load Balance</span><span class="c c4">Load_Balance</span><span class="c c5">Public 1</span><span class="c c6"></span><span class="c c7">domain-udp</span><span class="c c8"></span></div>
  </div>
  <div id="sbar"><div id="sthumb"></div></div>
</div>

<div id="tblcap"></div>
<!-- CARD -->
<div id="card">
  <svg class="abs" style="left:11px;top:10px" width="9" height="8" viewBox="0 0 9 8"><path d="M4.300 0v8L0 4zM9 0v8L4.700 4z" fill="#111"/></svg>
  <div class="t">Card</div>
</div>
</body>
</html>
